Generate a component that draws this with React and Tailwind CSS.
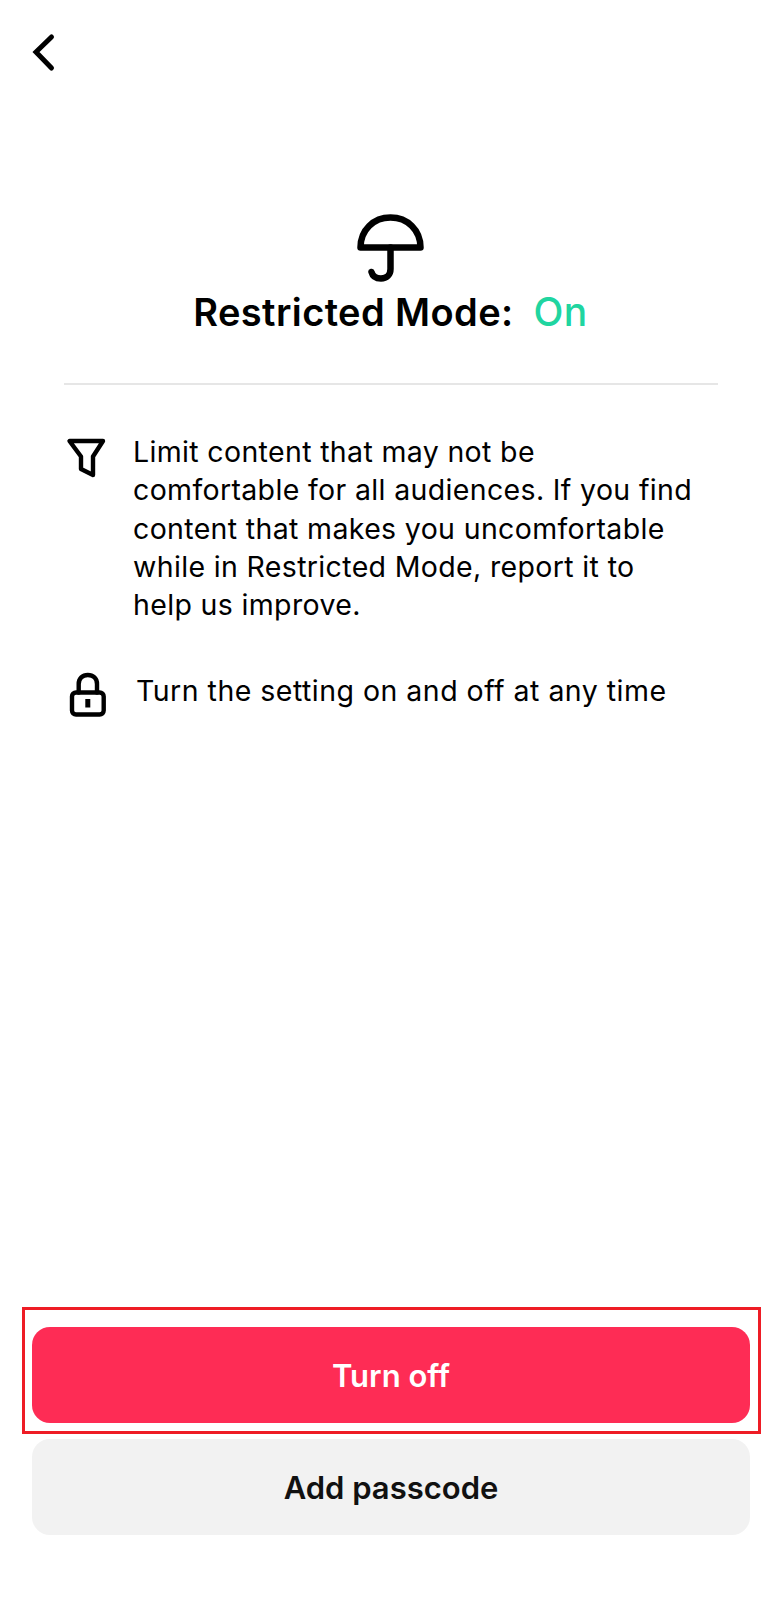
export default function App() {
  return (
    <div className="w-[776px] h-[1600px] bg-white flex flex-col font-['Inter','Noto_Sans',sans-serif] text-black overflow-hidden">
      <div className="h-[214px] pl-[30px] pt-[32px] shrink-0">
        <svg width="28" height="40" viewBox="0 0 28 40" fill="none" stroke="#000" strokeWidth="5" strokeLinecap="round" strokeLinejoin="miter">
          <path d="M21.5 5 L6 20 L21.5 36" />
        </svg>
      </div>
      <div className="pl-[5px] flex flex-col items-center shrink-0">
        <svg width="68" height="68" viewBox="0 0 68 68" fill="none" stroke="#000" strokeWidth="6.500" strokeLinecap="round" strokeLinejoin="round">
          <path d="M3.500 33.500 C3.500 16 16.500 3.500 33.500 3.500 C50.500 3.500 63.500 16 63.500 33.500 Z" />
          <path d="M33.500 33.500 V55 C33.500 61 29.500 64.500 24 64.500 C19 64.500 15.500 62 14.500 58" />
        </svg>
        <div className="mt-[5px] h-[50px] flex items-center gap-[20px] text-[38px] font-semibold leading-[50px] tracking-[0.4px]">
          <span>Restricted Mode:</span>
          <span className="text-[#20d5a0] font-medium text-[39px]">On</span>
        </div>
      </div>
      <div className="ml-[64px] w-[654px] mt-[46px] h-[2px] bg-[#e6e6e6] shrink-0" />
      <div className="pl-[66px] mt-[48px] flex items-start gap-[26px]">
        <svg className="mt-[4px] shrink-0" width="41" height="41" viewBox="0 0 41 41" fill="none" stroke="#000" strokeWidth="4.400" strokeLinejoin="round" strokeLinecap="round">
          <path d="M3.500 4 H37 L27 19.500 V38 L15 32 V19.500 Z" />
        </svg>
        <p className="text-[28.500px] leading-[38.300px] font-normal tracking-[0.35px] whitespace-nowrap">
          Limit content that may not be<br />
          comfortable for all audiences. If you find<br />
          content that makes you uncomfortable<br />
          while in Restricted Mode, report it to<br />
          help us improve.
        </p>
      </div>
      <div className="pl-[68px] mt-[48px] flex items-start gap-[27px]">
        <svg className="shrink-0" width="41" height="46" viewBox="0 0 41 46" fill="none" stroke="#000" strokeWidth="4.400" strokeLinejoin="round" strokeLinecap="round">
          <rect x="4" y="20.500" width="31.700" height="22" rx="4" />
          <path d="M10.700 20.500 V12 C10.700 6.500 14.500 3 19.800 3 C25.200 3 29 6.500 29 12 V20.500" />
          <path d="M19.800 27 V35.500" strokeWidth="5" strokeLinecap="butt" />
        </svg>
        <p className="text-[28.500px] leading-[38.300px] font-normal tracking-[0.48px] whitespace-nowrap">Turn the setting on and off at any time</p>
      </div>
      <div className="mt-auto mb-[65px] flex flex-col items-start">
        <div className="ml-[22px] w-[739px] h-[127px] border-[3px] border-[#ee1c25] pl-[7px] pr-[8px] pt-[17px]">
          <button className="w-full h-[96px] rounded-[18px] bg-[#fe2c55] text-white text-[31px] font-semibold pt-[2px]">Turn off</button>
        </div>
        <button className="ml-[32px] mt-[5px] w-[718px] h-[96px] rounded-[18px] bg-[#f2f2f2] text-[#111] text-[31px] font-semibold pt-[2px]">Add passcode</button>
      </div>
    </div>
  );
}
